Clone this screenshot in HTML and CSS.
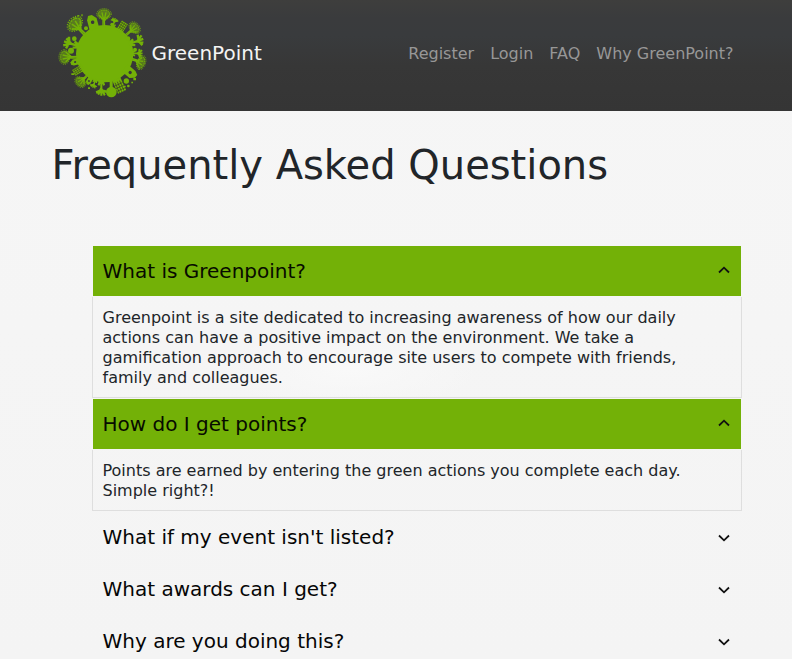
FILE: index.html
```html
<!DOCTYPE html>
<html lang="en">
<head>
<meta charset="utf-8">
<title>GreenPoint FAQ</title>
<link rel="stylesheet" href="styles.css">
</head>
<body>
<header class="navbar">
  <a class="brand">
    <svg class="logo" viewBox="18 18 276 276" aria-hidden="true">
      <defs>
        <g id="tree">
          <path d="M-3 4 L-3 -20 L-14 -33 M-1 -18 L-6 -42 M2 4 L1 -20 L6 -42 M2 -17 L15 -33" fill="none" stroke="#73b107" stroke-width="4"/>
          <ellipse cy="-36" rx="20" ry="15" fill="#73b107" opacity=".55"/>
          <ellipse cy="-37" rx="22" ry="16" fill="none" stroke="#73b107" stroke-width="3" stroke-dasharray="3 3"/>
          <ellipse cy="-37" rx="17" ry="11" fill="none" stroke="#73b107" stroke-width="3" stroke-dasharray="4 3"/>
        </g>
        <g id="twig" fill="none" stroke="#73b107" stroke-width="6">
          <path d="M0 6V-17L-10 -33M0 -15L9 -31M-5 -22L-15 -24M5 -22L15 -26M0 -13L0 -34M-3 4L-8 -9M3 4L8 -9"/>
        </g>
        <g id="flats">
          <rect x="-10" y="-31" width="21" height="34" fill="#73b107"/>
          <path d="M-5 -31V-4M1 -31V-4M7 -31V-4M-10 -25H11M-10 -18H11M-10 -11H11" stroke="#363b25" stroke-width="1.5"/>
        </g>
        <g id="house">
          <path d="M-14 6V-24L-8 -36H3L14 -24V6Z" fill="#73b107"/>
          <circle cy="-15" r="5" fill="#38383a"/>
        </g>
      </defs>
      <g fill="#73b107">
        <circle cx="164" cy="161" r="86"/>
        <use href="#tree" transform="translate(162 79)"/>
        <use href="#twig" transform="translate(189 79) rotate(15) scale(.75)"/>
        <use href="#flats" transform="translate(208 93) rotate(32)"/>
        <use href="#tree" transform="translate(229 105) rotate(49) scale(.9)"/>
        <use href="#twig" transform="translate(243 130) rotate(70) scale(1.15)"/>
        <use href="#twig" transform="translate(247 160) rotate(90) scale(.9)"/>
        <use href="#tree" transform="translate(246 178) rotate(110) scale(.98 .8)"/>
        <use href="#house" transform="translate(229 208) rotate(130)"/>
        <use href="#flats" transform="translate(201 240) rotate(156) scale(1.25)"/>
        <circle cx="184" cy="276" r="16"/>
        <path d="M179 240h9v30h-9z"/>
        <circle cx="229" cy="243" r="8"/>
        <circle cx="235" cy="258" r="4"/>
        <use href="#twig" transform="translate(154 245) rotate(180) scale(1.05 1.25)"/>
        <use href="#twig" transform="translate(136 241) rotate(199) scale(.7)"/>
        <use href="#house" transform="translate(121 236) rotate(210) scale(.55)"/>
        <use href="#tree" transform="translate(113 224) rotate(225) scale(.85)"/>
        <use href="#flats" transform="translate(97 204) rotate(239) scale(.95)"/>
        <use href="#house" transform="translate(85 184) rotate(258) scale(.65)"/>
        <use href="#tree" transform="translate(80 171) rotate(270)"/>
        <circle cx="63" cy="152" r="9"/>
        <use href="#twig" transform="translate(81 137) rotate(288) scale(1.2)"/>
        <circle cx="73" cy="116" r="7"/>
        <use href="#tree" transform="translate(105 103) rotate(316) scale(1.18)"/>
        <circle cx="108" cy="85" r="6"/>
        <use href="#house" transform="translate(132 82) rotate(345) scale(1.05)"/>
        <circle cx="186" cy="73" r="5"/>
        <circle cx="234" cy="116" r="7"/>
        <circle cx="255" cy="149" r="6"/>
        <path d="M82 45h6v4h-6zM94 43h4v6h-4zM73 52h5v4h-5zM64 220h9v5h-9zM114 262h6v5h-6zM250 234h8v7h-8zM244 245h5v5h-5zM130 256h6v5h-6zM222 257h5v5h-5z"/>
      </g>
    </svg>
    <span>GreenPoint</span>
  </a>
  <nav class="links">
    <a>Register</a>
    <a>Login</a>
    <a>FAQ</a>
    <a>Why GreenPoint?</a>
  </nav>
</header>
<main class="page">
  <h1>Frequently Asked Questions</h1>
  <section class="accordion">
    <button class="question open">What is Greenpoint?<svg class="chevron" viewBox="0 0 12 8"><path d="M1 6.5 6 1.7 11 6.5"/></svg></button>
    <div class="answer">Greenpoint is a site dedicated to increasing awareness of how our daily actions can have a positive impact on the environment. We take a gamification approach to encourage site users to compete with friends, family and colleagues.</div>
    <button class="question open">How do I get points?<svg class="chevron" viewBox="0 0 12 8"><path d="M1 6.5 6 1.7 11 6.5"/></svg></button>
    <div class="answer">Points are earned by entering the green actions you complete each day. Simple right?!</div>
    <button class="question">What if my event isn't listed?<svg class="chevron" viewBox="0 0 12 8"><path d="M1 1.5 6 6.3 11 1.5"/></svg></button>
    <button class="question">What awards can I get?<svg class="chevron" viewBox="0 0 12 8"><path d="M1 1.5 6 6.3 11 1.5"/></svg></button>
    <button class="question">Why are you doing this?<svg class="chevron" viewBox="0 0 12 8"><path d="M1 1.5 6 6.3 11 1.5"/></svg></button>
  </section>
</main>
</body>
</html>
```
FILE: styles.css
```css
* {
  box-sizing: border-box;
}

body {
  margin: 0;
  height: 659px;
  overflow: hidden;
  background:
    radial-gradient(ellipse 130px 40px at 350px 370px, #f9f9f9, transparent),
    linear-gradient(#f6f6f6, #f4f4f4);
  color: #212529;
  font: 16px/20px "DejaVu Sans", sans-serif;
}

.navbar {
  display: flex;
  align-items: center;
  justify-content: space-between;
  height: 111px;
  padding: 0 58.5px 4px 56px;
  background: linear-gradient(#3e3e3d 0, #3a3b3d 18px, #393b3d 36px, #373737 66px, #353535);
}

.brand {
  display: flex;
  align-items: center;
  gap: 3.5px;
  padding-bottom: 2px;
  color: #f4f4f4;
  font-size: 20px;
  line-height: 30px;
}

.logo {
  width: 92px;
  height: 92px;
  margin-bottom: 1px;
}

.links {
  display: flex;
  gap: 16px;
  color: #979797;
  line-height: 24px;
}

.page {
  padding: 30px 50px 0 51.5px;
}

h1 {
  margin: 0;
  font-size: 40px;
  font-weight: 400;
  line-height: 48px;
}

.accordion {
  margin: 56px 0 0 40.5px;
}

.question {
  display: flex;
  align-items: center;
  justify-content: space-between;
  width: 100%;
  height: 52px;
  padding: 0 11px 0 9.5px;
  border: 1px solid transparent;
  background: none;
  color: #060606;
  font: 20px/24px "DejaVu Sans", sans-serif;
}

.question.open {
  background: #73b107;
  background-clip: padding-box;
  color: #070b00;
}

.chevron {
  width: 12px;
  height: 8px;
  margin-top: 2px;
  fill: none;
  stroke: #111;
  stroke-width: 1.8;
}

.open .chevron {
  margin: 0 0 3px;
}

.answer {
  padding: 11px 20px 9px 9.5px;
  border: 1px solid #dedede;
  border-top: 0;
}
```
